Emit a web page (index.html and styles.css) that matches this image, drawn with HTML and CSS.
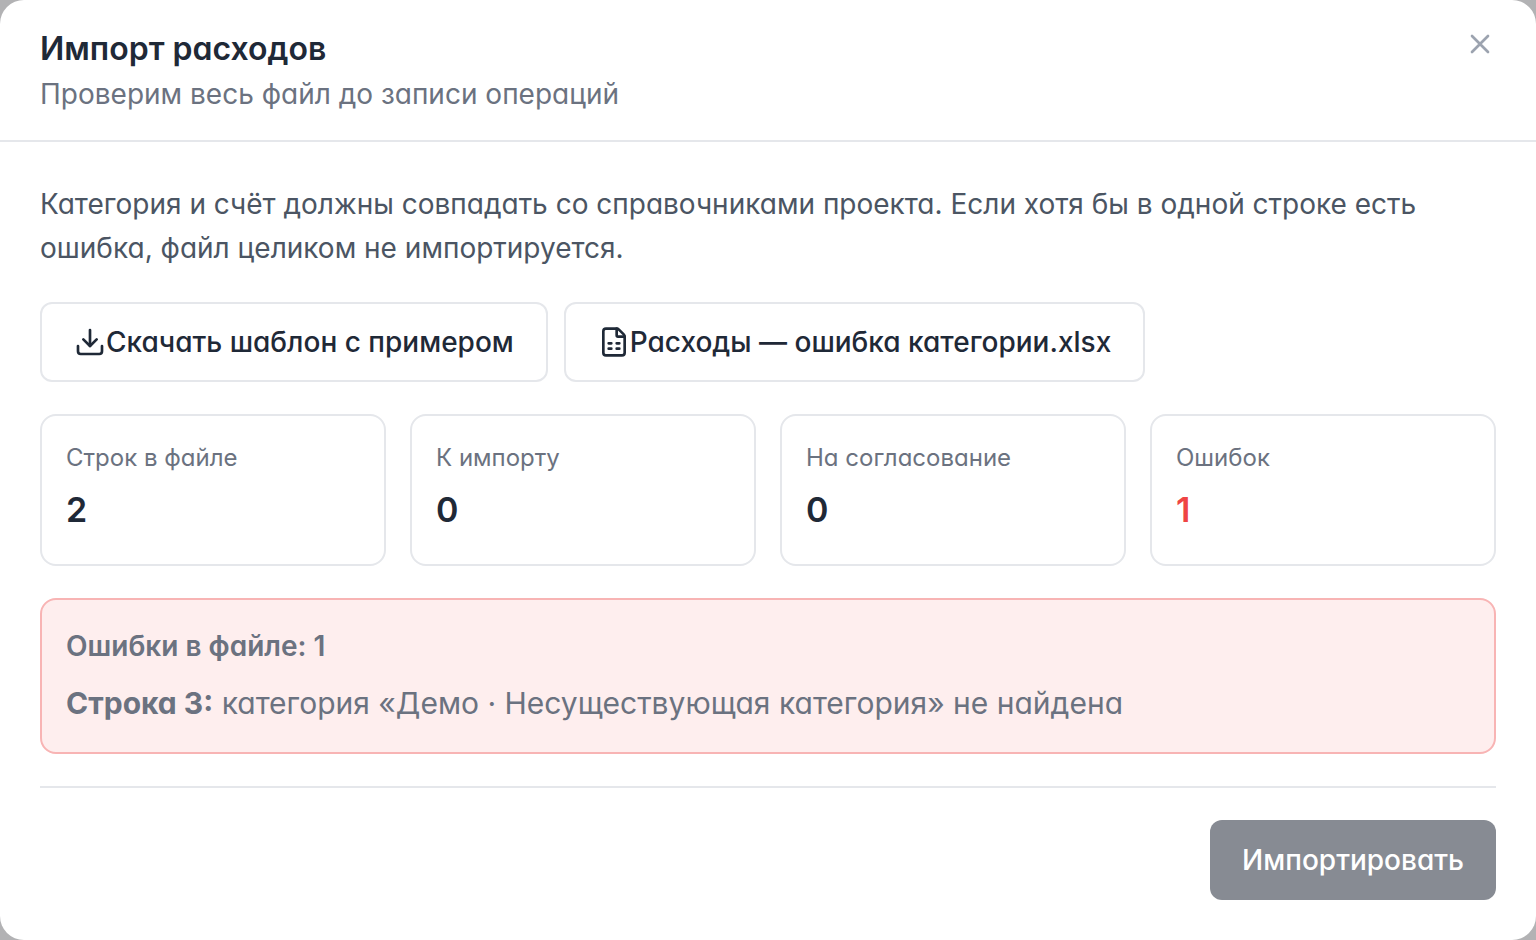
FILE: index.html
```
<!DOCTYPE html>
<html lang="ru">

<head>
    <meta charset="UTF-8">
    <meta name="viewport" content="width=device-width, initial-scale=1.0">
    <title>Импорт расходов</title>
    <link rel="stylesheet" href="styles.css">
</head>

<body>
    <main class="modal" role="dialog" aria-labelledby="modal-title">
        <header class="modal-header">
            <div>
                <h1 id="modal-title">Импорт расходов</h1>
                <p class="subtitle">Проверим весь файл до записи операций</p>
            </div>
            <button class="close" type="button" aria-label="Закрыть">
                <svg viewBox="0 0 24 24"><path d="M18 6 6 18M6 6l12 12"/></svg>
            </button>
        </header>

        <div class="modal-body">
            <p class="hint">Категория и счёт должны совпадать со справочниками проекта. Если хотя бы в одной строке есть ошибка, файл целиком не импортируется.</p>

            <div class="actions">
                <button class="btn" type="button">
                    <svg viewBox="0 0 24 24"><path d="M12 15V3"/><path d="M21 15v4a2 2 0 0 1-2 2H5a2 2 0 0 1-2-2v-4"/><path d="m7 10 5 5 5-5"/></svg>
                    Скачать шаблон с примером
                </button>
                <button class="btn" type="button">
                    <svg viewBox="0 0 24 24"><path d="M6 22a2 2 0 0 1-2-2V4a2 2 0 0 1 2-2h8a2.4 2.4 0 0 1 1.704.706l3.588 3.588A2.4 2.4 0 0 1 20 8v12a2 2 0 0 1-2 2z"/><path d="M14 2v5a1 1 0 0 0 1 1h5"/><path d="M8 13h2M14 13h2M8 17h2M14 17h2"/></svg>
                    Расходы — ошибка категории.xlsx
                </button>
            </div>

            <!-- Итоги проверки -->
            <dl class="stats">
                <div class="stat">
                    <dt>Строк в файле</dt>
                    <dd>2</dd>
                </div>
                <div class="stat">
                    <dt>К импорту</dt>
                    <dd>0</dd>
                </div>
                <div class="stat">
                    <dt>На согласование</dt>
                    <dd>0</dd>
                </div>
                <div class="stat stat-error">
                    <dt>Ошибок</dt>
                    <dd>1</dd>
                </div>
            </dl>

            <section class="errors">
                <h2>Ошибки в файле: 1</h2>
                <p><strong>Строка 3:</strong> категория «Демо · Несуществующая категория» не найдена</p>
            </section>

            <footer class="modal-footer">
                <button class="btn-primary" type="button" disabled>Импортировать</button>
            </footer>
        </div>
    </main>
</body>

</html>
```
FILE: styles.css
```
* {
    box-sizing: border-box;
}

body {
    margin: 0;
    background-color: #b2b2b4;
    color: #1f2937;
    font-family: Inter, "Liberation Sans", sans-serif;
    font-feature-settings: "cv11";
    font-size: 28px;
}

h1, h2, p, dl, dd {
    margin: 0;
}

button {
    font: inherit;
    font-feature-settings: inherit;
}

svg {
    flex: none;
    width: 32px;
    height: 32px;
    fill: none;
    stroke: currentColor;
    stroke-width: 2;
    stroke-linecap: round;
    stroke-linejoin: round;
}

.modal {
    min-height: 100vh;
    background-color: #ffffff;
    border-radius: 24px;
}

/* Шапка окна */
.modal-header {
    display: flex;
    justify-content: space-between;
    align-items: flex-start;
    padding: 26px 40px 24px;
    border-bottom: 2px solid #e5e7eb;
}

h1 {
    font-size: 32px;
    font-weight: 600;
    line-height: 46px;
}

.subtitle {
    color: #6b7280;
    line-height: 44px;
}

.close {
    display: flex;
    padding: 2px 0;
    border: none;
    background: none;
    color: #9ca3af;
    cursor: pointer;
}

.modal-body {
    display: flex;
    flex-direction: column;
    gap: 32px;
    padding: 40px;
}

.hint {
    color: #4b5563;
    line-height: 44px;
}

.actions {
    display: flex;
    flex-wrap: wrap;
    gap: 16px;
}

.btn {
    display: flex;
    align-items: center;
    height: 80px;
    padding: 0 32px;
    border: 2px solid #e5e7eb;
    border-radius: 12px;
    background-color: #ffffff;
    color: #1f2937;
    font-weight: 500;
    cursor: pointer;
}

/* Карточки с итогами */
.stats {
    display: grid;
    grid-template-columns: repeat(4, 1fr);
    gap: 24px;
}

.stat {
    padding: 24px;
    border: 2px solid #e5e7eb;
    border-radius: 16px;
}

.stat dt {
    color: #6b7280;
    font-size: 24px;
    line-height: 36px;
}

.stat dd {
    margin: 8px 0 4px;
    font-size: 34px;
    font-weight: 600;
    line-height: 52px;
}

.stat-error dd {
    color: #ef4444;
}

/* Список ошибок */
.errors {
    padding: 24px 24px 26px;
    border: 2px solid #f8b4b4;
    border-radius: 16px;
    background-color: #feeeee;
    color: #6b7280;
}

.errors h2 {
    font-size: 28px;
    font-weight: 600;
    line-height: 44px;
}

.errors p {
    margin-top: 12px;
    font-size: 30px;
    line-height: 46px;
}

.errors strong {
    font-weight: 700;
}

.modal-footer {
    display: flex;
    justify-content: flex-end;
    padding-top: 32px;
    border-top: 2px solid #e5e7eb;
}

.btn-primary {
    height: 80px;
    padding: 0 32px;
    border: none;
    border-radius: 12px;
    background-color: #878b93;
    color: #ffffff;
    font-weight: 500;
}
```
